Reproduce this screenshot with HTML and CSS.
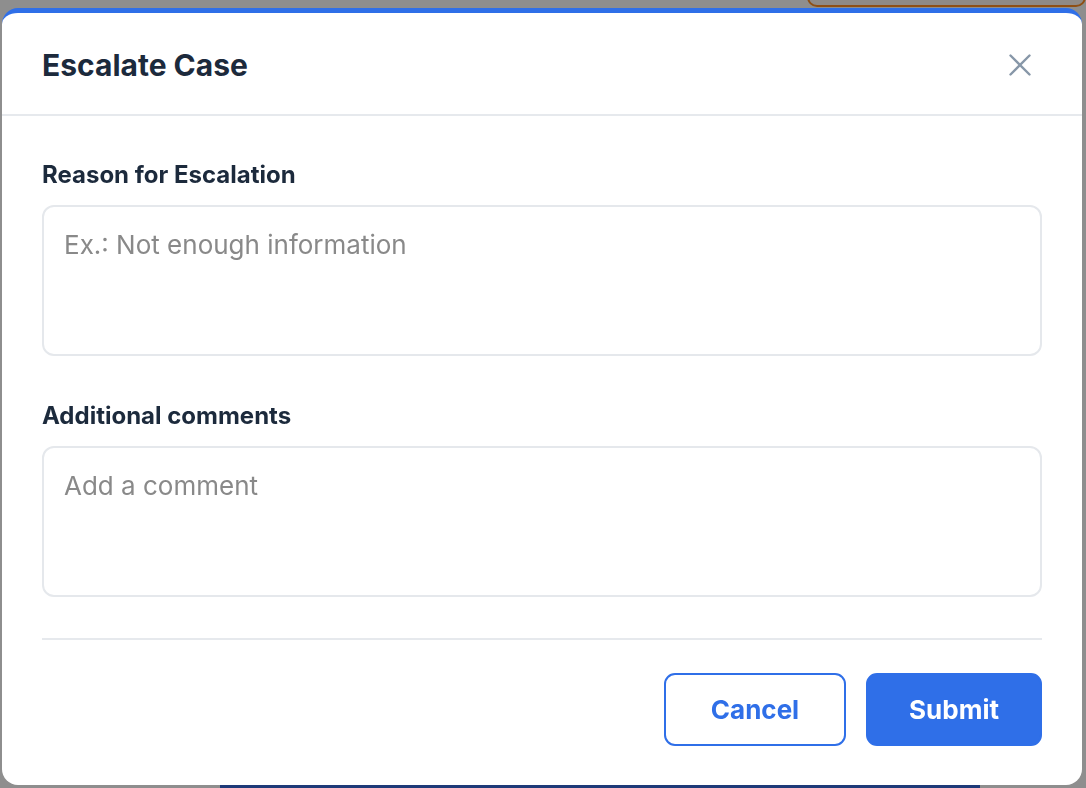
FILE: index.html
```html
<!DOCTYPE html>
<html lang="en">
<head>
<meta charset="utf-8">
<title>Escalate Case</title>
<link rel="stylesheet" href="styles.css">
</head>
<body>
<div class="page">
  <div class="page-topcard"></div>
  <div class="page-bottombar"></div>
</div>
<div class="overlay">
  <div class="modal" role="dialog" aria-labelledby="modal-title">
    <header class="modal-header">
      <h2 id="modal-title" class="modal-title">Escalate Case</h2>
      <button class="close-btn" aria-label="Close">
        <svg width="22" height="22" viewBox="0 0 22 22" fill="none" stroke="currentColor" stroke-width="2.4" stroke-linecap="round">
          <path d="M1.5 1.5 L20.5 20.5 M20.5 1.5 L1.5 20.5"/>
        </svg>
      </button>
    </header>
    <div class="modal-body">
      <label class="field-label" for="reason">Reason for Escalation</label>
      <textarea id="reason" class="field-input" placeholder="Ex.: Not enough information"></textarea>
      <label class="field-label field-label-second" for="comment">Additional comments</label>
      <textarea id="comment" class="field-input" placeholder="Add a comment"></textarea>
      <div class="divider"></div>
      <div class="actions">
        <button class="btn btn-outline">Cancel</button>
        <button class="btn btn-primary">Submit</button>
      </div>
    </div>
  </div>
</div>
</body>
</html>
```

FILE: styles.css
```css
* { box-sizing: border-box; }

html, body {
  margin: 0;
  padding: 0;
  width: 1086px;
  height: 788px;
  overflow: hidden;
  background: #8e8e8e;
  font-family: Inter, "Liberation Sans", sans-serif;
}

.page {
  width: 1086px;
  height: 788px;
  display: flex;
  flex-direction: column;
  justify-content: space-between;
}

.page-topcard {
  margin-left: 807px;
  margin-top: -20px;
  height: 27px;
  border: 2px solid #8f4f14;
  border-radius: 10px;
  background: #8f8a86;
}

.page-bottombar {
  margin-left: 220px;
  width: 760px;
  height: 4px;
  background: #1e3a78;
}

.overlay {
  position: fixed;
  inset: 0;
  padding: 8px 4px 3px 2px;
}

.modal {
  width: 1080px;
  height: 777px;
  background: #ffffff;
  border-top: 5px solid #2f6fe8;
  border-radius: 16px;
  display: flex;
  flex-direction: column;
}

.modal-header {
  height: 103px;
  display: flex;
  align-items: center;
  justify-content: space-between;
  padding: 2px 51px 0 40px;
  border-bottom: 2px solid #e6e9ed;
  flex-shrink: 0;
}

.modal-title {
  margin: 0;
  font-size: 30px;
  line-height: 36px;
  font-weight: 700;
  color: #1c2a3c;
}

.close-btn {
  border: 0;
  background: transparent;
  padding: 0;
  color: #8797a8;
  display: flex;
  cursor: pointer;
}

.modal-body {
  padding: 43px 40px 40px 40px;
  display: flex;
  flex-direction: column;
}

.field-label {
  font-size: 24px;
  line-height: 32px;
  font-weight: 700;
  color: #1c2a3c;
  margin-bottom: 14px;
}

.field-label-second {
  margin-top: 44px;
}

.field-input {
  width: 1000px;
  height: 151px;
  resize: none;
  border: 2px solid #e5e8ec;
  border-radius: 12px;
  padding: 20px 20px;
  font-family: Inter, "Liberation Sans", sans-serif;
  font-size: 26px;
  line-height: 36px;
  color: #1c2a3c;
  outline: none;
}

.field-input::placeholder {
  color: #898989;
}

.divider {
  height: 2px;
  background: #e6e9ed;
  margin-top: 41px;
  margin-bottom: 33px;
}

.actions {
  display: flex;
  justify-content: flex-end;
  gap: 20px;
}

.btn {
  height: 73px;
  border-radius: 11px;
  font-family: Inter, "Liberation Sans", sans-serif;
  font-size: 26px;
  font-weight: 700;
  cursor: pointer;
}

.btn-outline {
  width: 182px;
  background: #ffffff;
  color: #2f6fe8;
  border: 2.5px solid #2f6fe8;
}

.btn-primary {
  width: 176px;
  background: #2f6fe8;
  color: #ffffff;
  border: 2px solid #2f6fe8;
}
```
